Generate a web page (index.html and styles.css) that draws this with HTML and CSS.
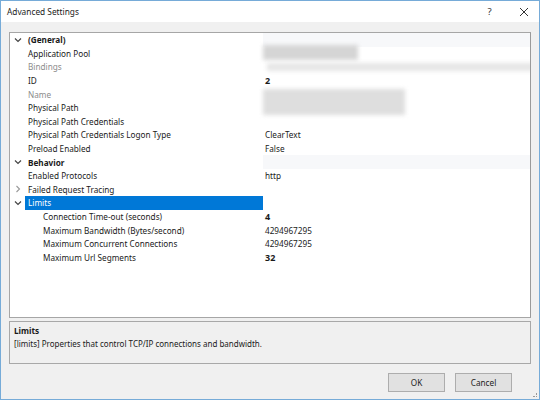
FILE: index.html
```html
<!DOCTYPE html>
<html>
<head>
<meta charset="utf-8">
<link rel="stylesheet" href="styles.css">
</head>
<body>
<div class="window">
  <div class="titlebar">
    <span class="title">Advanced Settings</span>
    <span class="tb-btn help">?</span>
    <span class="tb-btn close"><svg width="10" height="10" viewBox="0 0 10 10"><path d="M1 1L9 9M9 1L1 9" stroke="#333" stroke-width="1" fill="none"/></svg></span>
  </div>
  <div class="body">
    <div class="grid">
      <div class="row cat"><span class="exp"><svg width="8" height="6" viewBox="0 0 8 6"><path d="M1 1.5L4 4.5L7 1.5" stroke="#444" stroke-width="1.2" fill="none"/></svg></span><span class="lbl">(General)</span><span class="val"></span></div>
      <div class="row"><span class="exp"></span><span class="lbl">Application Pool</span><span class="val"><i class="blur b1"></i></span></div>
      <div class="row dis"><span class="exp"></span><span class="lbl">Bindings</span><span class="val"><i class="blur b2"></i></span></div>
      <div class="row"><span class="exp"></span><span class="lbl">ID</span><span class="val bold">2</span></div>
      <div class="row dis"><span class="exp"></span><span class="lbl">Name</span><span class="val"></span></div>
      <div class="row"><span class="exp"></span><span class="lbl">Physical Path</span><span class="val"><i class="blur b3"></i></span></div>
      <div class="row"><span class="exp"></span><span class="lbl">Physical Path Credentials</span><span class="val"></span></div>
      <div class="row"><span class="exp"></span><span class="lbl">Physical Path Credentials Logon Type</span><span class="val">ClearText</span></div>
      <div class="row"><span class="exp"></span><span class="lbl">Preload Enabled</span><span class="val">False</span></div>
      <div class="row cat"><span class="exp"><svg width="8" height="6" viewBox="0 0 8 6"><path d="M1 1.5L4 4.5L7 1.5" stroke="#444" stroke-width="1.2" fill="none"/></svg></span><span class="lbl">Behavior</span><span class="val"></span></div>
      <div class="row"><span class="exp"></span><span class="lbl">Enabled Protocols</span><span class="val">http</span></div>
      <div class="row"><span class="exp"><svg width="6" height="8" viewBox="0 0 6 8"><path d="M1.5 1L4.5 4L1.5 7" stroke="#999" stroke-width="1.1" fill="none"/></svg></span><span class="lbl">Failed Request Tracing</span><span class="val"></span></div>
      <div class="row"><span class="exp"><svg width="8" height="6" viewBox="0 0 8 6"><path d="M1 1.5L4 4.5L7 1.5" stroke="#444" stroke-width="1.2" fill="none"/></svg></span><span class="lbl sel">Limits</span><span class="val"></span></div>
      <div class="row"><span class="exp"></span><span class="lbl sub">Connection Time-out (seconds)</span><span class="val bold">4</span></div>
      <div class="row"><span class="exp"></span><span class="lbl sub">Maximum Bandwidth (Bytes/second)</span><span class="val">4294967295</span></div>
      <div class="row"><span class="exp"></span><span class="lbl sub">Maximum Concurrent Connections</span><span class="val">4294967295</span></div>
      <div class="row"><span class="exp"></span><span class="lbl sub">Maximum Url Segments</span><span class="val bold">32</span></div>
    </div>
    <div class="desc">
      <div class="desc-title">Limits</div>
      <div class="desc-text">[limits] Properties that control TCP/IP connections and bandwidth.</div>
    </div>
    <div class="buttons">
      <button class="btn">OK</button>
      <button class="btn">Cancel</button>
    </div>
  </div>
  <div class="grip"></div>
</div>
</body>
</html>
```
FILE: styles.css
```css
* { box-sizing: border-box; }
html, body { margin: 0; padding: 0; }
body {
  width: 540px; height: 400px; overflow: hidden;
  font-family: "Noto Sans", "Open Sans", sans-serif;
  font-size: 8.2px;
  color: #1a1a1a;
}
.window {
  position: relative;
  width: 540px; height: 400px;
  border: 1px solid #76abd8;
  background: #f0f0f0;
  display: flex; flex-direction: column;
}
.titlebar {
  height: 21px; background: #fff;
  display: flex; align-items: center;
  padding-left: 6px;
}
.title { flex: 1; font-size: 8.3px; color: #222; }
.tb-btn { width: 33px; display: flex; justify-content: center; align-items: center; }
.help { font-size: 9.5px; color: #333; }
.close { padding-left: 3px; }
.body { flex: 1; padding: 10px 8px 0 8px; display: flex; flex-direction: column; }
.grid {
  height: 286px;
  border: 1px solid #a6a6a6;
  border-right-color: #9a9a9a;
  background: #fff;
  overflow: hidden;
}
.row { display: flex; height: 13.6px; align-items: center; white-space: nowrap; }
.exp { width: 15px; height: 100%; display: flex; align-items: center; justify-content: center; padding-left: 1px; }
.lbl { width: 238px; height: 100%; padding-left: 3px; display: flex; align-items: center; }
.lbl.sub { padding-left: 18px; }
.lbl.sel { background: #0078d7; color: #fff; }
.val { flex: 1; height: 100%; padding-left: 2px; display: flex; align-items: center; position: relative; }
.cat .lbl { font-weight: bold; }
.cat .val { background: #f7f8fa; }
.dis .lbl { color: #8c8c8c; }
.bold { font-weight: bold; font-size: 9px; }
.blur { position: absolute; display: block; filter: blur(2px); }
.b1 { left: 0; top: -2px; width: 95px; height: 15px; background: #d5d5d5; }
.b2 { left: 4px; top: 3px; width: 270px; height: 8px; background: #e6e6e6; }
.b3 { left: 0; top: -12px; width: 142px; height: 26px; background: #dedede; }
.desc {
  margin-top: 3px; height: 43px;
  border: 1px solid #a8a8a8;
  background: #f0f0f0;
  padding: 2px 4px;
}
.desc-title { font-weight: bold; line-height: 13px; }
.desc-text { line-height: 13px; font-size: 8px; }
.buttons { display: flex; justify-content: flex-end; gap: 10px; margin-top: 9px; padding-right: 19px; }
.btn {
  width: 57px; height: 19px;
  background: #e1e1e1; border: 1px solid #adadad;
  font-family: inherit; font-size: 8.2px; color: #222;
  padding: 0;
}
.grip {
  position: absolute; right: 2px; bottom: 2px; width: 4px; height: 4px;
  border-right: 1px dotted #999; border-bottom: 1px dotted #999;
}
```
